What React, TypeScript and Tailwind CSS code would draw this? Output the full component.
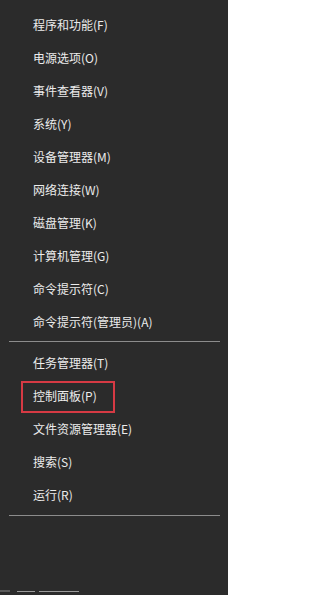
import { FC } from 'react'

const GROUP_A = [
  '程序和功能(F)',
  '电源选项(O)',
  '事件查看器(V)',
  '系统(Y)',
  '设备管理器(M)',
  '网络连接(W)',
  '磁盘管理(K)',
  '计算机管理(G)',
  '命令提示符(C)',
  '命令提示符(管理员)(A)',
]

const GROUP_B = ['任务管理器(T)', '控制面板(P)', '文件资源管理器(E)', '搜索(S)', '运行(R)']

const Item: FC<{ label: string; marked?: boolean }> = ({ label, marked }) => (
  <div className="relative h-[33px] flex items-center pl-[33px] text-[12px] text-[#ececec]">
    {label}
    {marked && (
      <div className="absolute left-[21px] top-[2px] w-[94px] h-[32px] border-2 border-[#d63a44]" />
    )}
  </div>
)

const Divider = () => <div className="ml-[9px] mr-[8px] h-px bg-[#8c8c8c]" />

const App: FC = () => {
  return (
    <div
      className="w-[228px] h-[595px] bg-[#2b2b2b] flex flex-col overflow-hidden"
      style={{ fontFamily: '"Noto Sans CJK SC", "Noto Sans", sans-serif' }}
    >
      <div className="pt-[8px]">
        {GROUP_A.map(l => <Item key={l} label={l} />)}
      </div>
      <div className="mt-[3px] mb-[4px]"><Divider /></div>
      <div>
        {GROUP_B.map(l => <Item key={l} label={l} marked={l === '控制面板(P)'} />)}
      </div>
      <div className="mt-[4px]"><Divider /></div>

      <div className="mt-auto pb-[3px] flex items-end">
        <div className="w-[10px] h-[2px] bg-[#5a5a5a]" />
        <div className="ml-[7px] w-[18px] h-px bg-[#9a9a9a]" />
        <div className="ml-[4px] w-[40px] h-px bg-[#9a9a9a]" />
      </div>
    </div>
  )
}

export default App
